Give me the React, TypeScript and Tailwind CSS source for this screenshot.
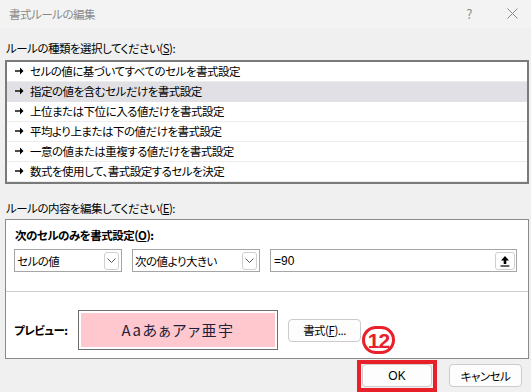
import React from "react";

const items = [
  "セルの値に基づいてすべてのセルを書式設定",
  "指定の値を含むセルだけを書式設定",
  "上位または下位に入る値だけを書式設定",
  "平均より上または下の値だけを書式設定",
  "一意の値または重複する値だけを書式設定",
  "数式を使用して、書式設定するセルを決定",
];

function Arrow() {
  return (
    <svg width="9" height="8" viewBox="0 0 9 8" className="shrink-0">
      <path d="M0 4H6" stroke="#000" strokeWidth="1.4" />
      <path d="M5 0.5L8.5 4L5 7.5Z" fill="#000" />
    </svg>
  );
}

function Chevron() {
  return (
    <div className="w-[15px] h-[18px] border border-[#cfcfcf] rounded-[3px] flex items-center justify-center bg-white">
      <svg width="9" height="5" viewBox="0 0 9 5">
        <path d="M0.5 0.5L4.5 4.5L8.5 0.5" stroke="#555" strokeWidth="1" fill="none" />
      </svg>
    </div>
  );
}

export default function App() {
  return (
    <div className="w-[531px] h-[392px] bg-[#f0f0f0] flex flex-col relative overflow-hidden text-[11.5px] tracking-[-0.5px] text-black [font-family:'Noto_Sans_CJK_JP',sans-serif] [font-feature-settings:'palt'] leading-[16px]">
      {/* title bar */}
      <div className="h-[28px] bg-[#f3f3f3] flex items-center pl-[9px] pr-[13px] text-[#8a8a8a]">
        <span className="flex-1 text-[11.5px]">書式ルールの編集</span>
        <span className="mr-[35px] text-[13px]">?</span>
        <svg width="11" height="11" viewBox="0 0 11 11">
          <path d="M0.5 0.5L10.5 10.5M10.5 0.5L0.5 10.5" stroke="#8a8a8a" strokeWidth="1" />
        </svg>
      </div>

      <div className="mt-[12px] h-[16px] pl-[6px]">
        ルールの種類を選択してください(<span className="underline">S</span>):
      </div>

      <div className="mt-[4px] ml-[5px] mr-[2px] h-[125px] border-2 border-[#7a7a7a] bg-white flex flex-col">
        {items.map((t, i) => (
          <div
            key={i}
            className={
              i === 1
                ? "h-[20px] flex items-center gap-[6px] pl-[8px] bg-[#e1e0e5] border-b border-[#e1e0e5]"
                : "h-[20px] flex items-center gap-[6px] pl-[8px] border-b border-[#ececec]"
            }
          >
            <Arrow />
            <span>{t}</span>
          </div>
        ))}
      </div>

      <div className="mt-[16px] h-[16px] pl-[6px]">
        ルールの内容を編集してください(<span className="underline">E</span>):
      </div>

      <div className="mt-[3px] ml-[5px] mr-[2px] h-[140px] border border-[#8a8a8a] bg-white flex flex-col">
        <div className="pl-[8px] pt-[7px]">
          <div className="font-bold h-[16px] pl-[1px]">
            次のセルのみを書式設定(<span className="underline">O</span>):
          </div>
          <div className="mt-[6px] flex items-center gap-[10px] h-[23px]">
            <div className="w-[108px] h-[23px] border border-[#a5a5a5] flex items-center justify-between pl-[2px] pr-[2px]">
              <span>セルの値</span>
              <Chevron />
            </div>
            <div className="w-[128px] h-[23px] border border-[#a5a5a5] flex items-center justify-between pl-[2px] pr-[2px]">
              <span>次の値より大きい</span>
              <Chevron />
            </div>
            <div className="w-[247px] h-[23px] border border-[#a5a5a5] flex items-center justify-between pl-[3px] pr-[1px]">
              <span className="[font-family:'Liberation_Sans',sans-serif] text-[12px] tracking-normal">=90</span>
              <div className="w-[20px] h-[18px] border border-[#cfcfcf] rounded-[3px] flex items-center justify-center bg-white">
                <svg width="10" height="12" viewBox="0 0 10 12">
                  <path d="M5 1L9 5.5H6.3V9H3.7V5.5H1Z" fill="#000" />
                  <path d="M0.5 11H9.5" stroke="#000" strokeWidth="1.2" />
                </svg>
              </div>
            </div>
          </div>
        </div>
        <div className="mt-[19px] border-t border-[#cdcdcd]" />
        <div className="mt-[18px] flex items-center pl-[8px]">
          <div className="w-[64px] font-bold">プレビュー:</div>
          <div className="w-[200px] h-[40px] border border-[#6e6e6e] p-[2px] bg-white">
            <div className="w-full h-full bg-[#ffc7ce] flex items-center justify-center text-[15px] text-[#1f1f3a] tracking-[1.5px] [font-feature-settings:'normal']">
              Aaあぁアァ亜宇
            </div>
          </div>
          <div className="ml-[10px] w-[73px] h-[23px] border border-[#cccccc] rounded-[4px] bg-[#fdfdfd] flex items-center justify-center">
            書式(<span className="underline">F</span>)...
          </div>
        </div>
      </div>

      <div className="flex items-start justify-end pr-[9px] gap-[12px]">
        <div className="mt-[1px] w-[80px] h-[32px] border-4 border-[#e8202a] flex items-start justify-center">
          <div className="w-[70px] h-[23px] border border-[#cccccc] rounded-[4px] bg-[#fdfdfd] flex items-center justify-center [font-family:'Liberation_Sans',sans-serif] text-[12px] tracking-normal">
            OK
          </div>
        </div>
        <div className="mt-[5px] w-[73px] h-[23px] border border-[#cccccc] rounded-[4px] bg-[#fdfdfd] flex items-center justify-center">
          キャンセル
        </div>
      </div>

      <div className="absolute left-[362px] top-[326px] w-[33px] h-[28px] rounded-full border-[3px] border-[#e8202a] flex items-center justify-center text-[#e8202a] font-bold text-[21px] leading-none [font-family:'Liberation_Sans',sans-serif] tracking-[-1px]">
        12
      </div>
    </div>
  );
}
